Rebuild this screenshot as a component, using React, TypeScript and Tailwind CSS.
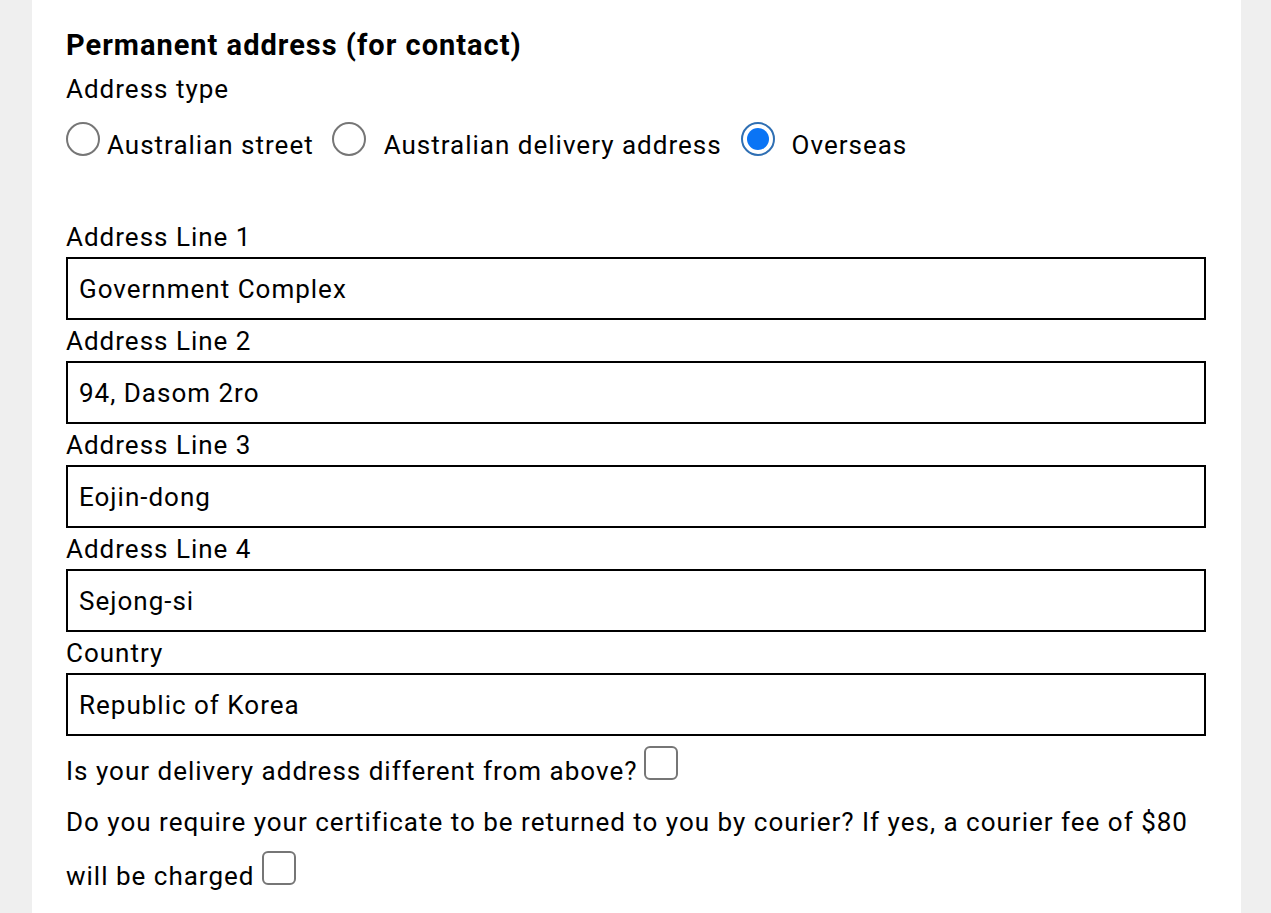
import React from "react";

const fields = [
  { label: "Address Line 1", value: "Government Complex" },
  { label: "Address Line 2", value: "94, Dasom 2ro" },
  { label: "Address Line 3", value: "Eojin-dong" },
  { label: "Address Line 4", value: "Sejong-si" },
  { label: "Country", value: "Republic of Korea" },
];

function Radio({ checked }: { checked?: boolean }) {
  if (checked) {
    return (
      <span className="inline-flex h-[34px] w-[34px] shrink-0 items-center justify-center rounded-full border-[2px] border-[#2f6fb3] bg-white">
        <span className="h-[22px] w-[22px] rounded-full bg-[#0a74f5]" />
      </span>
    );
  }
  return <span className="inline-block h-[34px] w-[34px] shrink-0 rounded-full border-[2px] border-[#767676] bg-white" />;
}

function Check() {
  return <span className="inline-block h-[34px] w-[34px] rounded-[6px] border-[2px] border-[#767676] bg-white align-baseline" />;
}

export default function App() {
  return (
    <div className="min-h-[913px] w-full bg-[#efefef] font-['Roboto','Liberation_Sans',sans-serif] text-black tracking-[1px]">
      <div className="ml-[32px] min-h-[913px] w-[1209px] bg-white px-[34px] pt-[27px]">
        <h2 className="text-[29px] font-bold leading-[36px]">Permanent address (for contact)</h2>
        <div className="mt-[8px] text-[26px] leading-[36px]">Address type</div>
        <div className="mt-[12px] flex h-[40px] items-center text-[26px]">
          <Radio />
          <span className="ml-[7px] mt-[12px]">Australian street</span>
          <span className="ml-[18px] flex"><Radio /></span>
          <span className="ml-[18px] mt-[12px]">Australian delivery address</span>
          <span className="ml-[19px] flex"><Radio checked /></span>
          <span className="ml-[17px] mt-[12px]">Overseas</span>
        </div>
        <div className="mt-[57px] flex flex-col">
          {fields.map((f) => (
            <div key={f.label} className="flex flex-col">
              <label className="h-[41px] text-[26px] leading-[42px]">{f.label}</label>
              <input
                readOnly
                value={f.value}
                className="h-[63px] w-[1140px] border-[2px] border-black bg-white px-[11px] text-[26px] tracking-[1px] text-black outline-none"
              />
            </div>
          ))}
        </div>
        <p className="mt-[10px] text-[26px] leading-[48px]">
          Is your delivery address different from above?<span className="ml-[7px]"><Check /></span>
        </p>
        <p className="text-[26px] leading-[54px]">
          Do you require your certificate to be returned to you by courier? If yes, a courier fee of $80 will be charged
          <span className="ml-[8px]"><Check /></span>
        </p>
      </div>
    </div>
  );
}
